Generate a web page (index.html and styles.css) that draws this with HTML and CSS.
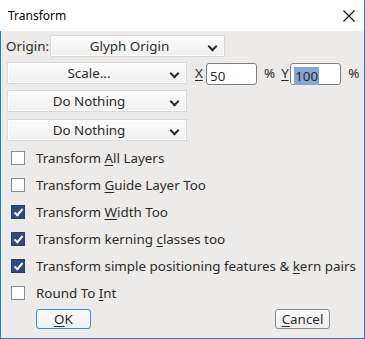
FILE: index.html
```html
<!DOCTYPE html>
<html>
<head>
  <meta charset="utf-8">
  <title>Transform</title>
  <link rel="stylesheet" href="styles.css">
</head>
<body>
  <div class="window">
    <header class="titlebar">
      <span class="title">Transform</span>
      <svg class="close" width="12" height="12" viewBox="0 0 12 12">
        <path d="M0.5 0.5 L11.5 11.5 M11.5 0.5 L0.5 11.5" stroke="#111" stroke-width="1.1" fill="none"/>
      </svg>
    </header>

    <div class="content">
      <div class="row origin-row">
        <span class="label">Origin:</span>
        <div class="select select-origin"><span>Glyph Origin</span><i class="chev"></i></div>
      </div>

      <div class="row scale-row">
        <div class="select select-wide"><span>Scale...</span><i class="chev"></i></div>
        <span class="axis"><u>X</u></span>
        <div class="entry"><span>50</span></div>
        <span class="pct">%</span>
        <span class="axis axis-y"><u>Y</u></span>
        <div class="entry"><span class="sel">100</span></div>
        <span class="pct">%</span>
      </div>

      <div class="row row-third">
        <div class="select select-wide"><span>Do Nothing</span><i class="chev"></i></div>
      </div>

      <div class="row row-fourth">
        <div class="select select-wide"><span>Do Nothing</span><i class="chev"></i></div>
      </div>

      <ul class="checks">
        <li><span class="box"></span><span>Transform <u>A</u>ll Layers</span></li>
        <li><span class="box"></span><span>Transform <u>G</u>uide Layer Too</span></li>
        <li><span class="box on"></span><span>Transform <u>W</u>idth Too</span></li>
        <li><span class="box on"></span><span>Transform kerning <u>c</u>lasses too</span></li>
        <li><span class="box on"></span><span>Transform simple positioning features &amp; <u>k</u>ern pairs</span></li>
        <li><span class="box"></span><span>Round To <u>I</u>nt</span></li>
      </ul>

      <div class="buttons">
        <button class="btn btn-default"><u>O</u>K</button>
        <button class="btn"><u>C</u>ancel</button>
      </div>
    </div>
  </div>
</body>
</html>
```

FILE: styles.css
```css
html, body {
  margin: 0;
  padding: 0;
}
body {
  font-family: "Noto Sans", "Open Sans", sans-serif;
  font-size: 13.4px;
  color: #2b2b2b;
  background: #fff;
}
u {
  text-decoration-thickness: 1px;
  text-underline-offset: 2px;
}
.window {
  width: 365px;
  height: 339px;
  box-sizing: border-box;
  border: 1px solid #1c7fd4;
  border-top: none;
  display: flex;
  flex-direction: column;
  background: #edebe9;
}
.titlebar {
  height: 31px;
  flex: none;
  background: #fff;
  display: flex;
  align-items: center;
  justify-content: space-between;
  padding: 0 9px 0 8px;
  margin: 0 -1px 0 -1px;
  border-right: 1px solid #1c7fd4;
}
.title {
  font-size: 12px;
  color: #000;
}
.close {
  margin-top: 1px;
}
.content {
  flex: 1;
  padding: 4px 0 0 5px;
  display: flex;
  flex-direction: column;
}
.row {
  display: flex;
  align-items: center;
  height: 22px;
}
.label {
  width: 44px;
}
.select {
  box-sizing: border-box;
  height: 22px;
  border: 1px solid #dad8d6;
  background: linear-gradient(#fbfbfb, #f1f0ef);
  box-shadow: inset 0 0 0 1px #fff;
  display: flex;
  align-items: center;
  position: relative;
  padding-right: 16px;
}
.select span {
  flex: 1;
  text-align: center;
}
.select-origin {
  width: 175px;
}
.select-wide {
  width: 180px;
  margin-left: 1px;
}
.chev {
  position: absolute;
  right: 8px;
  top: 7px;
  width: 5px;
  height: 5px;
  border-right: 2px solid #2b2b2b;
  border-bottom: 2px solid #2b2b2b;
  transform: rotate(45deg);
}
.scale-row {
  margin-top: 5px;
}
.axis {
  margin-left: 8px;
  width: 11px;
}
.axis-y {
  margin-left: 6px;
  width: 9px;
}
.entry {
  box-sizing: border-box;
  width: 51px;
  height: 22px;
  margin-top: 2px;
  border: 1px solid #7f7f7f;
  border-radius: 3px;
  background: #fff;
  padding: 4px 0 0 3px;
  line-height: 16px;
}
.sel {
  background: #86a6d3;
  padding: 0 1px;
}
.pct {
  margin-left: 7px;
}
.row-third {
  margin-top: 6px;
}
.row-fourth {
  margin-top: 7px;
}
.checks {
  list-style: none;
  margin: 3px 0 0 0;
  padding: 0 0 0 5px;
}
.checks li {
  height: 27px;
  display: flex;
  align-items: center;
}
.box {
  box-sizing: border-box;
  width: 14px;
  height: 14px;
  border: 1px solid #8a8a8a;
  background: #fff;
  margin-right: 11px;
  position: relative;
}
.box.on {
  background: #2c4c80;
  border-color: #24406e;
}
.box.on::after {
  content: "";
  position: absolute;
  left: 4px;
  top: 1px;
  width: 3px;
  height: 7px;
  border-right: 2px solid #fff;
  border-bottom: 2px solid #fff;
  transform: rotate(40deg);
}
.buttons {
  display: flex;
  justify-content: space-between;
  padding: 0 34px 0 30px;
  margin-top: 3px;
}
.btn {
  box-sizing: border-box;
  width: 55px;
  height: 20px;
  font: inherit;
  color: inherit;
  padding: 0;
  border: 1px solid #8a8a8a;
  border-radius: 3px;
  background: linear-gradient(#fafafa, #efefef);
}
.btn-default {
  border-color: #3c8ddb;
  background: linear-gradient(#f6f9fc, #eef2f6);
}
```
